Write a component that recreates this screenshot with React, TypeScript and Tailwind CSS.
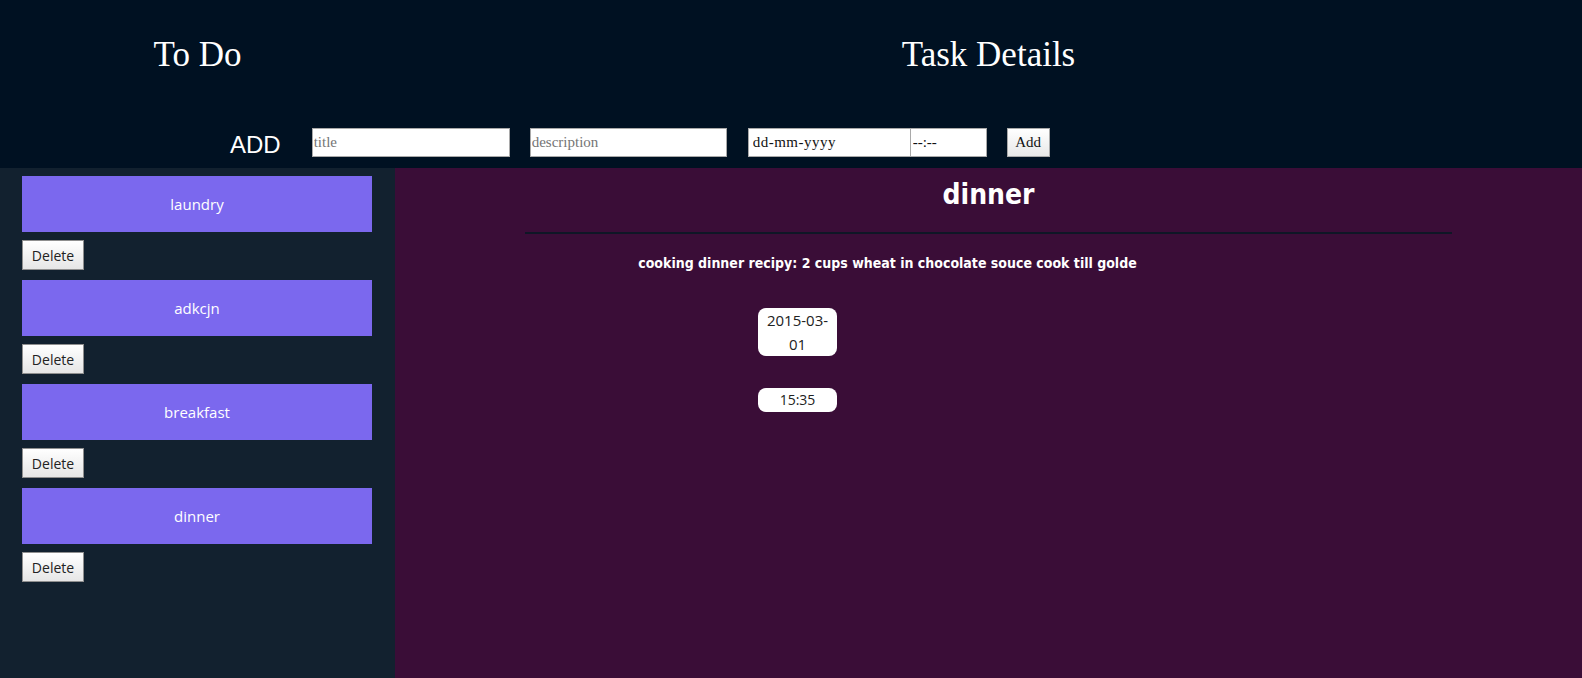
import React, { useState } from 'react';

interface Task {
  title: string;
  description: string;
  date: string;
  time: string;
}

const initialTasks: Task[] = [
  { title: 'laundry', description: 'wash clothes', date: '2015-03-01', time: '10:00' },
  { title: 'adkcjn', description: 'adkcjn', date: '2015-03-01', time: '11:00' },
  { title: 'breakfast', description: 'eggs and toast', date: '2015-03-01', time: '08:00' },
  {
    title: 'dinner',
    description: 'cooking dinner recipy: 2 cups wheat in chocolate souce cook till golde',
    date: '2015-03-01',
    time: '15:35',
  },
];

const serif = "font-['Liberation_Serif','Times_New_Roman',serif]";
const narrow = "font-['Liberation_Sans_Narrow','DejaVu_Sans_Condensed',sans-serif]";

const App: React.FC = () => {
  const [tasks, setTasks] = useState<Task[]>(initialTasks);
  const [selected, setSelected] = useState<number>(3);

  const current = tasks[selected];

  const removeTask = (index: number) => {
    setTasks(tasks.filter((_, i) => i !== index));
    if (selected >= index && selected > 0) setSelected(selected - 1);
  };

  return (
    <div className="flex h-[678px] w-full flex-col overflow-hidden bg-[#3a0d37]">
      {/* Header */}
      <header className="flex h-[168px] shrink-0 flex-col bg-[#001122]">
        <div className="flex pt-[33px]">
          <h1 className={`w-[395px] text-center text-[35px] leading-[44px] text-white ${serif}`}>To Do</h1>
          <h1 className={`flex-1 text-center text-[35px] leading-[44px] text-white ${serif}`}>Task Details</h1>
        </div>

        {/* Add form */}
        <div className="mt-[51px] flex items-center pl-[230px]">
          <span className="mt-[5px] mr-[31px] font-['Liberation_Sans',Arial,sans-serif] text-[24px] leading-none text-white">
            ADD
          </span>
          <input
            type="text"
            placeholder="title"
            className={`h-[29px] w-[198px] border border-[#a9a9a9] bg-white px-[1px] text-[15px] text-black outline-none placeholder:text-[#757575] ${serif}`}
          />
          <input
            type="text"
            placeholder="description"
            className={`ml-[20px] h-[29px] w-[197px] border border-[#a9a9a9] bg-white px-[1px] text-[15px] text-black outline-none placeholder:text-[#757575] ${serif}`}
          />
          <input
            type="text"
            placeholder="dd-mm-yyyy"
            className={`ml-[21px] h-[29px] w-[163px] border border-[#a9a9a9] bg-white px-[4px] text-[15px] tracking-[0.5px] text-black outline-none placeholder:text-[#111] ${serif}`}
          />
          <input
            type="text"
            placeholder="--:--"
            className={`h-[29px] w-[76px] border border-l-0 border-[#a9a9a9] bg-white px-[2px] text-[15px] text-black outline-none placeholder:text-[#111] ${serif}`}
          />
          <button
            className={`ml-[20px] h-[29px] w-[43px] border border-[#a9a9a9] bg-gradient-to-b from-white to-[#e8e8e8] text-[15px] text-[#111] ${serif}`}
          >
            Add
          </button>
        </div>
      </header>

      <div className="flex flex-1">
        {/* Task list */}
        <aside className="w-[395px] shrink-0 bg-[#12212f] pt-[8px] pl-[22px]">
          {tasks.map((task, i) => (
            <div key={task.title} className="mb-[10px]">
              <button
                onClick={() => setSelected(i)}
                className="flex h-[56px] w-[350px] items-center justify-center bg-[#7b68ee] font-['Open_Sans',sans-serif] text-[15px] text-white"
              >
                {task.title}
              </button>
              <button
                onClick={() => removeTask(i)}
                className="mt-[8px] h-[30px] w-[62px] border border-[#8f8f8f] bg-gradient-to-b from-white to-[#e6e6e6] font-['Open_Sans',sans-serif] text-[14px] text-[#222]"
              >
                Delete
              </button>
            </div>
          ))}
        </aside>

        {/* Details */}
        <main className="flex-1 bg-[#3a0d37]">
          {current && (
            <div>
              <h2 className={`pt-[7px] text-center text-[28px] leading-[40px] font-bold text-white ${narrow}`}>
                {current.title}
              </h2>
              <div className="mt-[17px] ml-[130px] h-[2px] w-[927px] bg-[#0f1626]" />
              <p className={`mt-[19px] w-[985px] text-center text-[14px] leading-[20px] font-bold text-white ${narrow}`}>
                {current.description}
              </p>
              <div className="mt-[35px] ml-[363px] w-[79px] rounded-[8px] bg-white px-[5px] text-center font-['Open_Sans',sans-serif] text-[15px] leading-[24px] text-[#222]">
                {current.date}
              </div>
              <div className="mt-[32px] ml-[363px] w-[79px] rounded-[8px] bg-white text-center font-['Open_Sans',sans-serif] text-[14px] leading-[24px] text-[#222]">
                {current.time}
              </div>
            </div>
          )}
        </main>
      </div>
    </div>
  );
};

export default App;
